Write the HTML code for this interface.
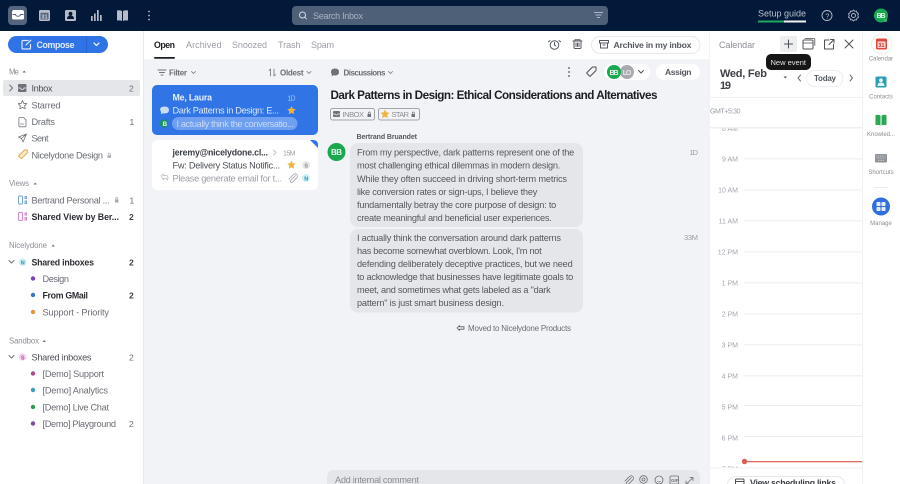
<!DOCTYPE html>
<html lang="en"><head><meta charset="utf-8"><title>Inbox</title>
<style>
html,body{margin:0;padding:0;width:900px;height:484px;overflow:hidden;background:#fff}
svg{display:block}
text{font-family:"Liberation Sans",sans-serif;font-size:9.2px;fill:#55585f;white-space:pre}
.b{font-weight:700}
.s{fill:#4d5056}.g{fill:#9a9da5}.k{fill:#1c1e22}
.h{font-size:7.8px;fill:#8b8e96}
.c{font-size:8.5px;fill:#6a6d74}
.n{font-size:9.2px;fill:#6a6d74}
.l{font-size:6px;fill:#8b8e96;text-anchor:middle}
.hr{font-size:7px;fill:#a5a7ae;text-anchor:end}
.i{fill:none;stroke:#6f727a;stroke-width:1;stroke-linecap:round;stroke-linejoin:round}
.w{fill:none;stroke:#fff;stroke-width:1.2;stroke-linecap:round;stroke-linejoin:round}
</style></head><body>
<svg width="900" height="484" viewBox="0 0 900 484" xmlns="http://www.w3.org/2000/svg">
<rect width="900" height="484" fill="#fff"/>
<!-- main bg -->
<rect x="143" y="59" width="566" height="425" fill="#f2f3f6"/>
<rect x="143" y="31" width="1" height="453" fill="#e9eaed"/>
<!-- top bar -->
<rect width="900" height="31" fill="#03193a"/>
<rect x="8" y="6" width="19" height="19" rx="4" fill="#56657d"/>
<path d="M12 12q0-1.500 1.500-2h9q1.500.5 1.500 2v6q0 1.500-1.500 1.500h-9q-1.500 0-1.500-1.500z" fill="#fff"/>
<path d="M12.500 14.500h3q.5 1.800 2.500 1.800t2.500-1.800h3" fill="none" stroke="#56657d" stroke-width="1"/>
<rect x="39" y="10" width="11" height="11" rx="1.500" fill="#b5bcc8"/><rect x="40.500" y="12.800" width="8" height="6.700" fill="#56657d"/><text x="41.400" y="18.500" style="font-size:5.500px;fill:#d5d9e0" class="b">31</text>
<rect x="65" y="10" width="11" height="11" rx="1.500" fill="#b5bcc8"/><circle cx="70.500" cy="13.700" r="1.900" fill="#03193a"/><path d="M67 19q0-3.500 3.500-3.500t3.500 3.500z" fill="#03193a"/>
<rect x="91" y="16" width="1.700" height="5" fill="#b5bcc8"/><rect x="94" y="13.500" width="1.700" height="7.500" fill="#b5bcc8"/><rect x="97" y="10" width="1.700" height="11" fill="#b5bcc8"/><rect x="100" y="15" width="1.700" height="6" fill="#b5bcc8"/>
<path d="M117 10.500q3-.8 5 .5v10q-2-1-5-.5zM128 10.500q-3-.8-5 .5v10q2-1 5-.5z" fill="#b5bcc8"/>
<circle cx="149" cy="11.500" r=".9" fill="#b5bcc8"/><circle cx="149" cy="15.500" r=".9" fill="#b5bcc8"/><circle cx="149" cy="19.500" r=".9" fill="#b5bcc8"/>
<rect x="292" y="6" width="316" height="19" rx="4" fill="#4e5f78"/>
<circle cx="302.500" cy="15" r="3" fill="none" stroke="#d5d9e0" stroke-width="1"/><path d="M304.700 17.200l2 2" stroke="#d5d9e0" stroke-width="1"/>
<text x="313" y="18.800" textLength="50" style="fill:#a9b2c0;font-size:9px">Search Inbox</text>
<path d="M594 12.500h9M595.500 15h6M597 17.500h3" stroke="#aeb6c2" stroke-width="1" fill="none"/>
<text x="758" y="16.500" textLength="48" style="fill:#b9c1cd;font-size:9px">Setup guide</text>
<rect x="758" y="20.500" width="26" height="2" fill="#1ea862"/><rect x="784" y="20.500" width="22" height="2" fill="#f2f2f2"/>
<circle cx="827" cy="15.500" r="5" fill="none" stroke="#b5bcc8" stroke-width=".9"/><text x="825.300" y="18.300" style="font-size:7.500px;fill:#b5bcc8">?</text>
<circle cx="853.500" cy="15.500" r="2" fill="none" stroke="#b5bcc8" stroke-width=".9"/><path d="M853.500 10l1.200 1.300 1.800-.2.500 1.700 1.500 1-.7 1.700.7 1.700-1.500 1-.5 1.700-1.800-.2-1.200 1.300-1.200-1.300-1.800.2-.5-1.700-1.500-1 .7-1.700-.7-1.700 1.500-1 .5-1.700 1.800.2z" fill="none" stroke="#b5bcc8" stroke-width=".9"/>
<circle cx="881" cy="15.500" r="7" fill="#18a84f"/><text x="876.500" y="18.200" textLength="9" class="b" style="font-size:7px;fill:#e9f7ee">BB</text><circle cx="885.500" cy="20.500" r="1.500" fill="#2bc36a"/>
<!-- compose -->
<rect x="8" y="36" width="100" height="17" rx="8.500" fill="#2f73e6"/><rect x="86" y="36" width=".8" height="17" fill="#2663c9"/>
<path d="M28 40.500h-5q-1 0-1 1v6.500q0 1 1 1h6.500q1 0 1-1v-3.500M26 45l4.800-4.800" class="w" style="stroke:#dfe9fa"/>
<text x="36.500" y="48" textLength="38" class="b" style="fill:#e4edfb;font-size:8.800px">Compose</text>
<path d="M94 43l2.500 2.500 2.500-2.500" class="w"/>
<!-- sidebar -->
<text x="9" y="74.500" textLength="10" class="h">Me</text><path d="M22.500 72.500l1.700-2 1.700 2z" fill="#6f727a"/>
<rect x="3" y="80" width="137" height="16" rx="2" fill="#e5e6ea"/>
<path d="M9.800 85l2.700 3-2.700 3" class="i"/>
<path d="M18 85q0-1 1-1h6.500q1 0 1 1v6q0 1-1 1h-6.500q-1 0-1-1z" fill="#6f727a"/><path d="M18 88h2.500q.5 1.500 1.800 1.500t1.800-1.500h2.400" fill="none" stroke="#e5e6ea" stroke-width=".8"/>
<text x="31.500" y="91.500" textLength="21" class="s">Inbox</text><text x="129" y="91.500" class="c">2</text>
<path d="M22.500 100.500l1.300 2.800 3 .4-2.200 2.100.6 3-2.700-1.500-2.700 1.500.6-3-2.200-2.100 3-.4z" class="i" style="stroke-width:.8"/>
<text x="31.500" y="108.300" textLength="29" class="n">Starred</text>
<path d="M19.500 117.500h4l2.500 2.500v6q0 .8-.8.8h-5.500q-.8 0-.8-.8v-7.700q0-.8.600-.8zM20.500 124h3" class="i" style="stroke-width:.8"/>
<text x="31.500" y="125" textLength="23.500" class="n">Drafts</text><text x="129.500" y="125" class="c">1</text>
<path d="M26.500 134l-8 3 3 1.500 1.500 3.500zM21.500 138.500l5-4.500" class="i" style="stroke-width:.8"/>
<text x="31.500" y="141.500" textLength="17" class="n">Sent</text>
<path d="M18.500 156l6-6h2.800v2.800l-6 6z" fill="#fbeccb" stroke="#e2a540" stroke-width=".9"/>
<text x="31.500" y="158.300" textLength="71.500" class="n">Nicelydone Design</text>
<rect x="107.500" y="155" width="3.500" height="3" fill="#b3b5bb"/><path d="M108.300 155v-1q0-1 1-1t1 1v1" fill="none" stroke="#b3b5bb" stroke-width=".7"/>
<text x="9" y="186" textLength="20" class="h">Views</text><path d="M33.500 184.500l1.700-2 1.700 2z" fill="#6f727a"/>
<rect x="18.500" y="196" width="4" height="8" rx="1" fill="none" stroke="#6a9fd8" stroke-width=".9"/><path d="M25 196.500h1.500v2h-1.500zM25 201h1.500v2.500h-1.500z" fill="none" stroke="#6a9fd8" stroke-width=".9"/>
<text x="31.500" y="203.300" textLength="78" class="n">Bertrand Personal ...</text>
<rect x="115" y="199.500" width="3.500" height="3" fill="#a5a7ae"/><path d="M115.800 199.500v-1q0-1 1-1t1 1v1" fill="none" stroke="#a5a7ae" stroke-width=".7"/>
<text x="129.500" y="203.300" class="c">1</text>
<rect x="18.500" y="212.500" width="4" height="8" rx="1" fill="none" stroke="#cf7fc9" stroke-width=".9"/><path d="M25 213h1.500v2h-1.500zM25 217.500h1.500v2.500h-1.500z" fill="none" stroke="#cf7fc9" stroke-width=".9"/>
<text x="31.500" y="220" textLength="87.500" class="b" style="font-size:8.800px;fill:#2b2d32">Shared View by Ber...</text><text x="129" y="220" class="c b" style="fill:#3d4046">2</text>
<text x="9" y="248" textLength="38" class="h">Nicelydone</text><path d="M51.500 246.500l1.700-2 1.700 2z" fill="#6f727a"/>
<path d="M9 260.500l2.500 2.500 2.500-2.500" class="i"/>
<circle cx="22.500" cy="262" r="3.800" fill="#cdf1f6"/><text x="20.800" y="264.300" class="b" style="font-size:5.500px;fill:#2a8fb0">N</text>
<text x="31.500" y="265.500" textLength="62.500" class="b" style="font-size:8.800px;fill:#2b2d32">Shared inboxes</text><text x="129" y="265.500" class="c b" style="fill:#3d4046">2</text>
<circle cx="33" cy="278.500" r="2.200" fill="#7d3fc4"/><text x="42.500" y="282" textLength="26.500" class="n">Design</text>
<circle cx="33" cy="295" r="2.200" fill="#3f72c8"/><text x="42.500" y="298.700" textLength="45.500" class="b" style="font-size:8.800px;fill:#2b2d32">From GMail</text><text x="129" y="298.700" class="c b" style="fill:#3d4046">2</text>
<circle cx="33" cy="312" r="2.200" fill="#e8923a"/><text x="42.500" y="315.300" textLength="66.500" class="n">Support - Priority</text>
<text x="9" y="343.500" textLength="30" class="h">Sandbox</text><path d="M42.500 342l1.700-2 1.700 2z" fill="#6f727a"/>
<path d="M9 355.500l2.500 2.500 2.500-2.500" class="i"/>
<circle cx="22.500" cy="357" r="3.800" fill="#f9d3ef"/><text x="20.900" y="359.300" class="b" style="font-size:5.500px;fill:#b8479a">S</text>
<text x="31.500" y="360.300" textLength="60" class="s">Shared inboxes</text><text x="129" y="360.500" class="c">2</text>
<circle cx="33" cy="373.500" r="2.200" fill="#a94a8c"/><text x="42.500" y="377" textLength="61.500" class="n">[Demo] Support</text>
<circle cx="33" cy="390" r="2.200" fill="#3a9fb8"/><text x="42.500" y="393.700" textLength="65.500" class="n">[Demo] Analytics</text>
<circle cx="33" cy="407" r="2.200" fill="#2a9a55"/><text x="42.500" y="410.300" textLength="66.500" class="n">[Demo] Live Chat</text>
<circle cx="33" cy="423.500" r="2.200" fill="#7a4aa8"/><text x="42.500" y="427" textLength="73.500" class="n">[Demo] Playground</text><text x="129" y="427" class="c">2</text>
<!-- tabs -->
<text x="154" y="48" textLength="21" class="b k" style="font-size:8.800px">Open</text><rect x="154" y="57" width="21" height="1.800" rx=".9" fill="#1c1e22"/>
<text x="186" y="48" textLength="35.500" class="g" style="font-size:9px">Archived</text>
<text x="232" y="48" textLength="35" class="g" style="font-size:9px">Snoozed</text>
<text x="278" y="48" textLength="22.500" class="g" style="font-size:9px">Trash</text>
<text x="311" y="48" textLength="23" class="g" style="font-size:9px">Spam</text>
<circle cx="554.500" cy="45" r="4.300" class="i" style="stroke:#55585f"/><path d="M554.500 42.500v2.500l1.500 1M550 40.500l-1.500 1.300M559 40.500l1.500 1.300" class="i" style="stroke:#55585f"/>
<path d="M573 41h9M575 41v-1.200h5v1.200M574 41v6.500q0 1 1 1h5q1 0 1-1v-6.500M576 43v3.500M577.500 43v3.500M579 43v3.500" class="i" style="stroke:#55585f"/>
<rect x="591.500" y="36.500" width="108.500" height="17" rx="8.500" fill="#fff" stroke="#e8e9ec"/>
<path d="M599.500 40.500h9v2.500h-9zM600.500 43v5h7v-5M603 45h2" class="i" style="stroke:#55585f"/>
<text x="613.500" y="47.800" textLength="78" class="b" style="font-size:8.700px;fill:#55585f">Archive in my inbox</text>
<!-- filter row -->
<path d="M158 70h8M159.500 72.500h5M161 75h2" class="i"/><text x="169" y="75.300" textLength="18" class="b" style="font-size:8px;fill:#6a6d74">Filter</text><path d="M191.500 71.500l2 2 2-2" class="i" style="stroke-width:.8"/>
<path d="M270.500 76v-7l-1.500 1.500M274 69v7l1.500-1.500" class="i" style="stroke-width:.8"/><text x="280" y="75.300" textLength="23.500" class="b" style="font-size:8px;fill:#6a6d74">Oldest</text><path d="M307 71.500l2 2 2-2" class="i" style="stroke-width:.8"/>
<path d="M331 72q0-3.500 4-3.500t4 3.500-4 3.500q-.8 0-1.500-.2l-2 1 .4-1.800q-.9-1-.9-2.500z" fill="#6f727a"/>
<text x="343.500" y="75.300" textLength="42" class="b" style="font-size:8px;fill:#6a6d74">Discussions</text><path d="M388.500 71.500l2 2 2-2" class="i" style="stroke-width:.8"/>
<circle cx="569" cy="68" r=".9" fill="#4d5056"/><circle cx="569" cy="72" r=".9" fill="#4d5056"/><circle cx="569" cy="76" r=".9" fill="#4d5056"/>
<path d="M587 72.500l5.500-5.500h3.500v3.500l-5.500 5.500q-.5.500-1 0l-2.500-2.500q-.5-.5 0-1z" class="i" style="stroke:#4d5056"/>
<rect x="604" y="64" width="46" height="16" rx="8" fill="#fff"/>
<circle cx="627" cy="72" r="7" fill="#a8aaae"/><text x="622.800" y="75" textLength="8.500" class="b" style="font-size:7px;fill:#e8e8ea">LO</text>
<circle cx="614" cy="72" r="7" fill="#18a84f"/><text x="609.500" y="75" textLength="9" class="b" style="font-size:7px;fill:#e9f7ee">BB</text>
<path d="M638.500 70.500l2.500 2.500 2.500-2.500" class="i" style="stroke:#4d5056"/>
<rect x="656" y="64" width="44" height="16" rx="8" fill="#fff"/><text x="665" y="75" textLength="26.500" class="b" style="font-size:8.500px;fill:#55585f">Assign</text>
<!-- cards -->
<rect x="152" y="85" width="166" height="50" rx="5" fill="#3074e6"/>
<text x="172.500" y="100.500" textLength="39.500" class="b" style="fill:#e9f0fc;font-size:8.800px">Me, Laura</text>
<text x="287.500" y="100.300" textLength="8" style="font-size:7px;fill:#a9c5f3">1D</text>
<path d="M160 110q0-3.500 4.500-3.500t4.500 3.500-4.500 3.500q-.9 0-1.700-.2l-2 1 .4-1.800q-.7-1-.7-2.500z" fill="#cbdcf8"/>
<text x="172.500" y="113.700" textLength="106.500" style="fill:#dce7fa">Dark Patterns in Design: E...</text>
<path d="M291.500 106l1.300 2.700 3 .4-2.200 2.100.6 3-2.700-1.500-2.700 1.500.6-3-2.200-2.100 3-.4z" fill="#eeb43e"/>
<circle cx="164" cy="123.500" r="4" fill="#15915a"/><text x="162.500" y="126" class="b" style="font-size:6.500px;fill:#e6f5ee">B</text>
<rect x="172" y="117" width="125.500" height="13" rx="6.500" fill="#6f9ff0"/>
<text x="176.500" y="126.800" textLength="117.500" style="fill:#c8d9f8">I actually think the conversatio...</text>
<rect x="152" y="140" width="166" height="50" rx="5" fill="#fff"/>
<path d="M310 140h3q5 0 5 5v3z" fill="#3074e6"/>
<text x="172.500" y="155.500" textLength="95.500" class="b" style="fill:#3d4046;font-size:8.800px">jeremy@nicelydone.cl...</text>
<path d="M273.500 150l2.500 2.500-2.500 2.500" class="i" style="stroke:#c5c7cc"/>
<text x="283" y="155.300" textLength="12.500" style="font-size:7px;fill:#9a9da5">15M</text>
<text x="172.500" y="168.500" textLength="107.500" style="fill:#4d5056">Fw: Delivery Status Notific...</text>
<path d="M291.500 160.500l1.300 2.700 3 .4-2.200 2.100.6 3-2.700-1.500-2.700 1.500.6-3-2.200-2.100 3-.4z" fill="#eeb43e"/>
<circle cx="306" cy="165" r="4" fill="#e6e7ea"/><text x="304.400" y="167.300" class="b" style="font-size:5.500px;fill:#8b8e96">S</text>
<path d="M161 176l2.500-2v1.500h2.500q2 0 2 2.500 0 1-.5 2-.5-1.500-2-1.500h-2v1.500z" class="i" style="stroke:#b5b7bc;stroke-width:.7"/>
<text x="172.500" y="181.500" textLength="109.500" style="fill:#9a9da5">Please generate email for t...</text>
<path d="M295.500 175.500l-5 5a1.300 1.300 0 0 0 1.800 1.800l4.500-4.500a2.300 2.300 0 0 0-3.300-3.300l-4.500 4.500" class="i" style="stroke:#9a9da5;stroke-width:.8"/>
<circle cx="306" cy="178" r="4" fill="#cdf1f6"/><text x="304.200" y="180.300" class="b" style="font-size:5.500px;fill:#2a8fb0">N</text>
<!-- thread -->
<text x="330.500" y="99" textLength="327" class="b k" style="font-size:11.700px">Dark Patterns in Design: Ethical Considerations and Alternatives</text>
<rect x="330.500" y="108.500" width="44" height="11.500" rx="2" fill="#f2f3f6" stroke="#8a8d94" stroke-width=".8"/>
<path d="M333 112q0-1 1-1h5q1 0 1 1v4q0 1-1 1h-5q-1 0-1-1z" fill="#6f727a"/><path d="M333 114h2q.4 1 1.500 1t1.500-1h2" fill="none" stroke="#f2f3f6" stroke-width=".7"/>
<text x="342.500" y="117" textLength="21.500" style="font-size:7.500px;fill:#8a8d94">INBOX</text>
<rect x="367.500" y="114" width="3.500" height="3" fill="#6f727a"/><path d="M368.300 114v-1q0-1 1-1t1 1v1" fill="none" stroke="#6f727a" stroke-width=".7"/>
<rect x="378.500" y="108.500" width="41" height="11.500" rx="2" fill="#f2f3f6" stroke="#8a8d94" stroke-width=".8"/>
<path d="M385 109.500l1.400 2.900 3.100.4-2.300 2.200.6 3.100-2.800-1.500-2.800 1.500.6-3.100-2.300-2.200 3.100-.4z" fill="#eeb43e"/>
<text x="391.500" y="117" textLength="17.500" style="font-size:7.500px;fill:#8a8d94">STAR</text>
<rect x="411.500" y="114" width="3.500" height="3" fill="#6f727a"/><path d="M412.300 114v-1q0-1 1-1t1 1v1" fill="none" stroke="#6f727a" stroke-width=".7"/>
<text x="356.500" y="139" textLength="60.500" class="b" style="font-size:7px;fill:#55585f">Bertrand Bruandet</text>
<circle cx="336.500" cy="152" r="9" fill="#18a84f"/><text x="331" y="155.200" textLength="11" class="b" style="font-size:8px;fill:#e9f7ee">BB</text>
<rect x="350" y="143" width="233" height="84" rx="8" fill="#e5e6ea"/>
<rect x="350" y="229" width="233" height="83.500" rx="8" fill="#e5e6ea"/>
<text x="357" y="155.500" textLength="217.300">From my perspective, dark patterns represent one of the</text>
<text x="357" y="168.600" textLength="203.300">most challenging ethical dilemmas in modern design.</text>
<text x="357" y="181.900" textLength="210">While they often succeed in driving short-term metrics</text>
<text x="357" y="195" textLength="180.300">like conversion rates or sign-ups, I believe they</text>
<text x="357" y="208" textLength="199.300">fundamentally betray the core purpose of design: to</text>
<text x="357" y="221.200" textLength="194.700">create meaningful and beneficial user experiences.</text>
<text x="357" y="241" textLength="204">I actually think the conversation around dark patterns</text>
<text x="357" y="254" textLength="184.700">has become somewhat overblown. Look, I'm not</text>
<text x="357" y="267" textLength="215.700">defending deliberately deceptive practices, but we need</text>
<text x="357" y="280" textLength="216.300">to acknowledge that businesses have legitimate goals to</text>
<text x="357" y="293" textLength="193.700">meet, and sometimes what gets labeled as a "dark</text>
<text x="357" y="306.200" textLength="147">pattern" is just smart business design.</text>
<text x="689.500" y="155" textLength="8.500" style="font-size:7.500px;fill:#9a9da5">1D</text>
<text x="684" y="240" textLength="14" style="font-size:7.500px;fill:#9a9da5">33M</text>
<path d="M457 328l2.500-2.500v1.300h4.500v2.400h-4.500v1.300z" class="i" style="stroke:#55585f;stroke-width:.8"/>
<text x="468" y="331" textLength="103" style="font-size:8px;fill:#6a6d74">Moved to Nicelydone Products</text>
<!-- comment box -->
<path d="M327 484v-6q0-8 8-8h357q8 0 8 8v6z" fill="#e5e6ea"/>
<text x="335" y="483" textLength="84" style="fill:#8b8e96">Add internal comment</text>
<path d="M631.500 477.500l-5 5a1.300 1.300 0 0 0 1.800 1.800l4.500-4.500a2.300 2.300 0 0 0-3.300-3.300l-4.500 4.500" class="i" style="stroke:#6a6d74;stroke-width:.8"/>
<circle cx="643.500" cy="479.500" r="3.800" class="i" style="stroke:#6a6d74;stroke-width:.8"/><circle cx="643.500" cy="479.500" r="1.500" class="i" style="stroke:#6a6d74;stroke-width:.8"/>
<circle cx="659" cy="480" r="4" class="i" style="stroke:#6a6d74;stroke-width:.8"/><path d="M657.500 481.500q1.500 1 3 0" class="i" style="stroke:#6a6d74;stroke-width:.7"/>
<rect x="670" y="476" width="8.500" height="8" rx="1" class="i" style="stroke:#6a6d74;stroke-width:.8"/><text x="671" y="482" style="font-size:4.500px;fill:#6a6d74" class="b">GIF</text>
<path d="M686.500 484l6-6M690 477.500h3v3M686 481v3h3" class="i" style="stroke:#6a6d74;stroke-width:.8"/>
<!-- calendar panel -->
<rect x="709" y="31" width="153" height="453" fill="#fff"/>
<rect x="709" y="31" width=".8" height="453" fill="#eceef1"/>
<rect x="862" y="31" width=".8" height="453" fill="#eceef1"/>
<text x="719" y="48" textLength="36" style="font-size:9px;fill:#8b8e96">Calendar</text>
<rect x="780" y="36" width="17" height="16" rx="2" fill="#eceef0"/><path d="M788.500 40v8M784.500 44h8" class="i" style="stroke:#4d5056"/>
<rect x="803" y="40" width="10" height="9" rx="1" class="i" style="stroke:#4d5056"/><path d="M803 43h10M805 38.500h9q.8 0 .8 1v6" class="i" style="stroke:#4d5056;stroke-width:.8"/>
<path d="M829 40h-4.500v9h9v-4.500M829 44.500l5-5M830.500 39.500h3.500v3.500" class="i" style="stroke:#4d5056"/>
<path d="M845 40l8 8M853 40l-8 8" class="i" style="stroke:#4d5056"/>
<rect x="766" y="54" width="45" height="16" rx="5" fill="#161616"/>
<text x="770.500" y="65" textLength="35.500" style="font-size:7.500px;fill:#e2e2e2">New event</text>
<text x="720" y="77" textLength="47" class="b" style="font-size:11px;fill:#3f4147">Wed, Feb</text>
<text x="720" y="89" textLength="11" class="b" style="font-size:11px;fill:#3f4147">19</text>
<path d="M783.500 76.500h3.500l-1.700 2z" fill="#4d5056"/>
<path d="M800.500 75l-2.500 3 2.500 3" class="i" style="stroke:#6a6d74"/>
<rect x="806.500" y="70.500" width="36.500" height="16" rx="8" fill="#fff" stroke="#eceef1"/>
<text x="814" y="81" textLength="22" class="b" style="font-size:8px;fill:#55585f">Today</text>
<path d="M850 75l2.500 3-2.500 3" class="i" style="stroke:#6a6d74"/>
<rect x="710" y="97" width="152" height=".8" fill="#eceef1"/>
<text x="710" y="113.500" textLength="30.500" style="font-size:7px;fill:#9a9da5">GMT+5:30</text>
<text x="738" y="131" class="hr">8 AM</text><rect x="710" y="120" width="152" height="7" fill="#fff"/>
<rect x="710" y="127" width="152" height="1.500" fill="#eef0f2"/>
<g fill="#e6e7ea"><rect x="744" y="158.500" width="118" height=".8"/><rect x="744" y="189.500" width="118" height=".8"/><rect x="744" y="220.500" width="118" height=".8"/><rect x="744" y="251.500" width="118" height=".8"/><rect x="744" y="282.500" width="118" height=".8"/><rect x="744" y="313.500" width="118" height=".8"/><rect x="744" y="344.500" width="118" height=".8"/><rect x="744" y="375.500" width="118" height=".8"/><rect x="744" y="405" width="118" height=".8"/><rect x="744" y="436" width="118" height=".8"/></g>
<text x="738" y="161.500" class="hr">9 AM</text><text x="738" y="192.500" class="hr">10 AM</text><text x="738" y="223.500" class="hr">11 AM</text><text x="738" y="254.500" class="hr">12 PM</text><text x="738" y="285.500" class="hr">1 PM</text><text x="738" y="316.500" class="hr">2 PM</text><text x="738" y="347.500" class="hr">3 PM</text><text x="738" y="378.500" class="hr">4 PM</text><text x="738" y="409.500" class="hr">5 PM</text><text x="738" y="440.500" class="hr">6 PM</text>
<rect x="744" y="461" width="118" height="1.300" fill="#df6a61"/><circle cx="744.500" cy="461.500" r="2.700" fill="#df5b52"/>
<text x="738" y="471.500" class="hr">7 PM</text>
<rect x="710" y="468" width="152" height="16" fill="#fff"/><rect x="710" y="467.500" width="152" height=".8" fill="#eceef1"/>
<rect x="727.500" y="476.500" width="117" height="16" rx="8" fill="#fff" stroke="#e6e7ea"/>
<rect x="735.500" y="479" width="8.500" height="8" rx="1" class="i" style="stroke:#4d5056"/><path d="M735.500 481.500h8.500" class="i" style="stroke:#4d5056"/>
<text x="750" y="486" textLength="86" class="b" style="font-size:8.800px;fill:#3f4147">View scheduling links</text>
<!-- right rail -->
<circle cx="881.500" cy="44" r="10" fill="#fff" stroke="#f3e9e9"/>
<rect x="876" y="38.500" width="11" height="11" rx="1.500" fill="#dd4a3d"/><rect x="877.500" y="41.500" width="8" height="6.500" fill="#f7d6d2"/><text x="878.300" y="47" class="b" style="font-size:5.500px;fill:#c8382c">31</text>
<text x="881" y="60.500" class="l">Calendar</text>
<rect x="875.500" y="76.500" width="11" height="11" rx="1.500" fill="#2a9fb5"/><circle cx="881" cy="80.300" r="1.900" fill="#e6f6f9"/><path d="M877.500 86q0-3.500 3.500-3.500t3.500 3.500z" fill="#e6f6f9"/>
<text x="881" y="98.500" class="l">Contacts</text>
<path d="M875.500 115q3-.8 5 .5v10q-2-1-5-.5zM886.500 115q-3-.8-5 .5v10q2-1 5-.5z" fill="#2aa654"/>
<text x="881" y="136" class="l">Knowled...</text>
<rect x="875" y="154" width="12" height="8.500" rx="1" fill="#8f9298"/><path d="M876.500 156h9M876.500 158h9M878 160.300h6" stroke="#d5d6d9" stroke-width=".8" stroke-dasharray="1 .7" fill="none"/>
<text x="881" y="174" class="l">Shortcuts</text>
<rect x="874" y="187" width="14" height=".8" fill="#e6e7ea"/>
<circle cx="881" cy="206.500" r="9" fill="#2f6fe0"/>
<rect x="876.500" y="202" width="4" height="4" rx=".8" fill="#e4edfb"/><rect x="881.500" y="202" width="4" height="4" rx=".8" fill="#e4edfb"/><rect x="876.500" y="207" width="4" height="4" rx=".8" fill="#e4edfb"/><rect x="881.500" y="207" width="4" height="4" rx=".8" fill="#e4edfb"/>
<text x="881" y="225" class="l">Manage</text>
</svg>
</body></html>
